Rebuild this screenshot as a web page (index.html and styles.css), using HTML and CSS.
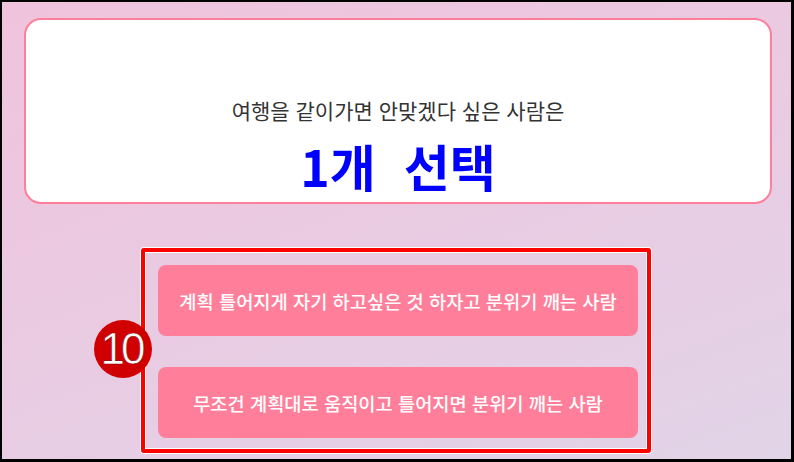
FILE: index.html
```html
<!DOCTYPE html>
<html lang="ko">
<head>
<meta charset="utf-8">
<link rel="stylesheet" href="styles.css">
</head>
<body>
<div class="frame">
  <div class="card">
    <p class="question">여행을 같이가면 안맞겠다 싶은 사람은</p>
    <h1 class="title">1개 &nbsp;선택</h1>
  </div>
  <div class="annot">
    <div class="options">
      <button class="opt">계획 틀어지게 자기 하고싶은 것 하자고 분위기 깨는 사람</button>
      <button class="opt">무조건 계획대로 움직이고 틀어지면 분위기 깨는 사람</button>
    </div>
  </div>
  <div class="badge">10</div>
</div>
</body>
</html>
```
FILE: styles.css
```css
html, body {
  margin: 0;
  padding: 0;
}
body {
  font-family: "Noto Sans CJK KR", "Noto Sans", sans-serif;
}
.frame {
  position: relative;
  width: 794px;
  height: 462px;
  box-sizing: border-box;
  border: 2px solid #000;
  border-right-width: 3px;
  border-bottom-width: 3px;
  background: linear-gradient(160deg, #f0c3dc 0%, #e9cbe2 50%, #e2d4e8 100%);
  display: flex;
  flex-direction: column;
  overflow: hidden;
}
.card {
  margin: 16px 19px 0 22px;
  height: 186px;
  box-sizing: border-box;
  border: 2px solid #ff7f9b;
  border-radius: 17px;
  background: #fff;
  display: flex;
  flex-direction: column;
  align-items: center;
  padding-top: 76px;
}
.question {
  margin: 0;
  font-size: 21px;
  line-height: 28px;
  color: #333;
  font-weight: 400;
}
.title {
  margin: 12px 0 0;
  font-size: 50px;
  line-height: 58px;
  font-weight: 700;
  color: #0000ff;
}
.annot {
  align-self: flex-start;
  margin: 44px 0 0 139px;
  width: 510px;
  box-sizing: border-box;
  border: 4px solid #ff0000;
  border-radius: 3px;
  box-shadow: 0 0 0 1px #fff, inset 0 0 0 1px #fff;
  padding: 13px 9px 11px 13px;
}
.options {
  display: flex;
  flex-direction: column;
  gap: 31px;
}
.opt {
  display: block;
  width: 100%;
  height: 71px;
  border: none;
  border-radius: 8px;
  background: #ff7f9b;
  color: #fff;
  font-family: "Noto Sans CJK KR", "Noto Sans", sans-serif;
  font-size: 18.7px;
  font-weight: 500;
  padding: 0;
}
.badge {
  position: absolute;
  left: 92px;
  top: 318px;
  width: 58px;
  height: 58px;
  border-radius: 50%;
  background: #d00000;
  color: #fff;
  font-family: "Liberation Sans", Arial, sans-serif;
  font-size: 44px;
  line-height: 58px;
  text-align: center;
  letter-spacing: -4px;
  text-indent: -4px;
  -webkit-text-stroke: 0.6px #8a0000;
}
```
